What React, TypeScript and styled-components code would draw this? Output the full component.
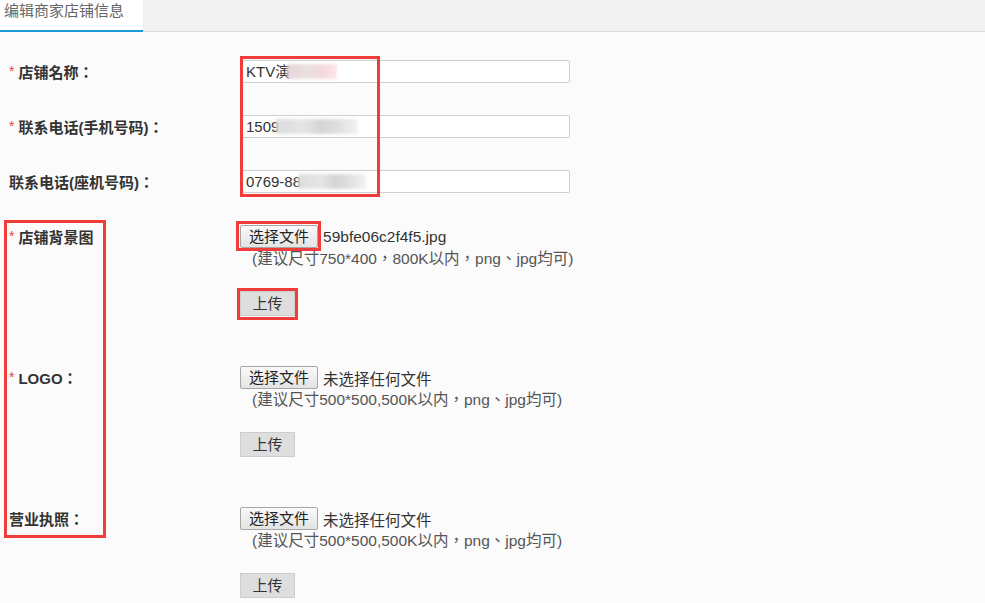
import React from 'react'
import styled, {createGlobalStyle} from 'styled-components'

const GlobalStyle = createGlobalStyle`
    html, body {
        margin: 0;
        padding: 0;
        background: #fbfbfb;
        font-family: "Liberation Sans", "Noto Sans CJK TC", sans-serif;
        color: #333;
    }
`

const Page = styled.div`
    position: relative;
    width: 985px;
    height: 603px;
    overflow: hidden;
    background: #fbfbfb;
`

const TabBar = styled.div`
    display: flex;
    height: 32px;
    background: #f2f2f2;
    border-bottom: 1px solid #dcdcdc;
    box-sizing: border-box;
`

const Tab = styled.div`
    width: 143px;
    height: 32px;
    box-sizing: border-box;
    padding: 1px 0 0 4px;
    background: #fff;
    border-bottom: 2px solid #1a9ad6;
    font-size: 15px;
    line-height: 20px;
    color: #666;
`

const Form = styled.div`
    padding: 28px 0 0 9px;
`

const Row = styled.div<{ $gap: number }>`
    display: grid;
    grid-template-columns: 233px 1fr;
    align-items: start;
    margin-bottom: ${p => p.$gap}px;
`

const Label = styled.div`
    height: 22px;
    display: flex;
    align-items: center;
    font-size: 15px;
    font-weight: bold;
    color: #333;
    white-space: nowrap;
`

const Star = styled.span`
    color: #f23b3b;
    font-weight: normal;
    font-size: 14px;
    margin-right: 4px;
`

const TextInput = styled.div`
    width: 328px;
    height: 23px;
    box-sizing: border-box;
    border: 1px solid #cfcfcf;
    border-radius: 2px;
    background: #fff;
    padding: 0 3px;
    font-size: 15px;
    line-height: 21px;
    color: #333;
    display: flex;
    align-items: center;
`

const Blur = styled.span<{ $w: number; $tint?: boolean }>`
    display: inline-block;
    width: ${p => p.$w}px;
    height: 15px;
    margin-left: -3px;
    background: ${p => p.$tint
        ? 'linear-gradient(90deg, #e6d2d4, #e8e0e0 40%, #f4d8da 70%, #fde6e8)'
        : 'linear-gradient(90deg, #dcdcdc, #e4e4e4 35%, #d2d2d2 55%, #dedede 75%, #f2f2f2)'};
    filter: blur(1.5px);
    opacity: 0.95;
`

const FileLine = styled.div`
    display: flex;
    align-items: center;
    height: 23px;
    margin-left: -2px;
`

const ChooseButton = styled.div`
    height: 23px;
    box-sizing: border-box;
    padding: 0 8px;
    border: 1px solid #a6a6a6;
    border-radius: 2px;
    background: linear-gradient(#fafafa, #e3e3e3);
    font-size: 15px;
    line-height: 21px;
    color: #222;
`

const FileName = styled.span`
    margin-left: 5px;
    font-size: 15.5px;
    color: #333;
`

const Hint = styled.div`
    margin: 1px 0 0 10px;
    font-size: 15.5px;
    line-height: 20px;
    color: #555;
`

const UploadButton = styled.div`
    margin: 22px 0 0 -2px;
    width: 55px;
    height: 25px;
    box-sizing: border-box;
    border: 1px solid #cdcdcd;
    background: #dedede;
    font-size: 15px;
    line-height: 23px;
    text-align: center;
    color: #333;
`

const Mark = styled.div<{ $x: number; $y: number; $w: number; $h: number }>`
    position: absolute;
    left: ${p => p.$x}px;
    top: ${p => p.$y}px;
    width: ${p => p.$w}px;
    height: ${p => p.$h}px;
    border: 3px solid #f23b3b;
    box-sizing: border-box;
    pointer-events: none;
`

type FileRowProps = {
    label: string
    required?: boolean
    file?: string
    hint: string
    gap: number
}

const FileRow = ({label, required, file, hint, gap}: FileRowProps) => (
    <Row $gap={gap}>
        <Label>
            {required && <Star>*</Star>}
            {label}
        </Label>
        <div>
            <FileLine>
                <ChooseButton>选择文件</ChooseButton>
                <FileName>{file || '未选择任何文件'}</FileName>
            </FileLine>
            <Hint>{hint}</Hint>
            <UploadButton>上传</UploadButton>
        </div>
    </Row>
)

export default function App() {
    return (
        <Page>
            <GlobalStyle />
            <TabBar>
                <Tab>编辑商家店铺信息</Tab>
            </TabBar>
            <Form>
                <Row $gap={32}>
                    <Label><Star>*</Star>店铺名称：</Label>
                    <TextInput>KTV演<Blur $w={50} $tint /></TextInput>
                </Row>
                <Row $gap={32}>
                    <Label><Star>*</Star>联系电话(手机号码)：</Label>
                    <TextInput>1509<Blur $w={82} /></TextInput>
                </Row>
                <Row $gap={32}>
                    <Label>联系电话(座机号码)：</Label>
                    <TextInput>0769-88<Blur $w={68} /></TextInput>
                </Row>
                <FileRow
                    label='店铺背景图'
                    required
                    file='59bfe06c2f4f5.jpg'
                    hint='(建议尺寸750*400，800K以内，png、jpg均可)'
                    gap={50}
                />
                <FileRow
                    label='LOGO：'
                    required
                    hint='(建议尺寸500*500,500K以内，png、jpg均可)'
                    gap={50}
                />
                <FileRow
                    label='营业执照：'
                    hint='(建议尺寸500*500,500K以内，png、jpg均可)'
                    gap={0}
                />
            </Form>
            <Mark $x={240} $y={56} $w={140} $h={141} />
            <Mark $x={236} $y={221} $w={85} $h={30} />
            <Mark $x={237} $y={288} $w={61} $h={32} />
            <Mark $x={4} $y={220} $w={102} $h={318} />
        </Page>
    )
}
